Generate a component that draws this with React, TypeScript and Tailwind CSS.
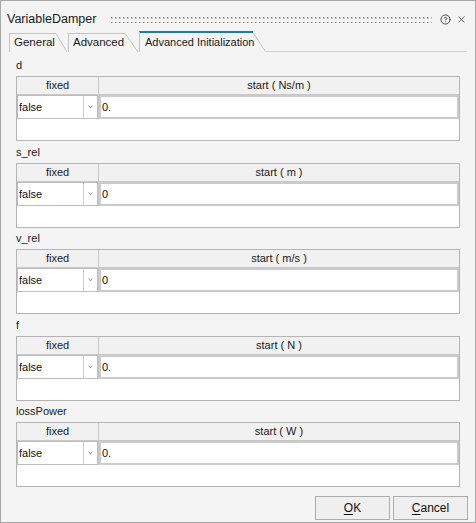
import { CircleHelp, X } from "lucide-react";

type Param = {
  name: string;
  unit: string;
  start: string;
};

const params: Param[] = [
  { name: "d", unit: "Ns/m", start: "0." },
  { name: "s_rel", unit: "m", start: "0" },
  { name: "v_rel", unit: "m/s", start: "0" },
  { name: "f", unit: "N", start: "0." },
  { name: "lossPower", unit: "W", start: "0." },
];

function Gripper() {
  return (
    <svg className="h-[7px] flex-1" preserveAspectRatio="none">
      <defs>
        <pattern id="grip" width="4" height="5" patternUnits="userSpaceOnUse">
          <rect x="1" y="1" width="1.5" height="1.5" fill="#7c7c7c" />
        </pattern>
      </defs>
      <rect width="100%" height="100%" fill="url(#grip)" />
    </svg>
  );
}

function Slant({ w, h, top = 0 }: { w: number; h: number; top?: number }) {
  return (
    <svg width={w} height={h} className="block shrink-0">
      <line x1="0" y1={top + 0.5} x2={w} y2={h} stroke="#c4c4c4" strokeWidth="1" />
    </svg>
  );
}

function Tab({ label, width, slant }: { label: string; width: number; slant: number }) {
  return (
    <div className="flex h-[19px] items-stretch">
      <div
        className="flex items-center whitespace-nowrap border-l border-t border-[#c4c4c4] pl-[4px] text-[11.5px] text-[#1a1a1a]"
        style={{ width }}
      >
        {label}
      </div>
      <Slant w={slant} h={19} />
    </div>
  );
}

function ParamTable({ p }: { p: Param }) {
  return (
    <div className="flex h-[65px] flex-col border border-[#b4b4b4] bg-white">
      {/* header */}
      <div className="flex h-[18px] shrink-0 border-b border-[#c8c8c8] bg-[#f1f1f1] text-[11px] text-[#1a1a1a]">
        <div className="flex w-[82px] items-center justify-center border-r border-[#c8c8c8]">fixed</div>
        <div className="flex flex-1 items-center justify-center">start ( {p.unit} )</div>
      </div>

      {/* value row */}
      <div className="flex h-[24px] shrink-0 text-[11px] text-[#111]">
        <div className="flex w-[82px] border-r border-[#c8c8c8]">
          <div className="flex w-[81px] border border-[#bdbdbd] bg-white">
            <div className="flex flex-1 items-center border-r border-[#cfcfcf] pl-[1px]">false</div>
            <div className="flex w-[13px] items-center justify-center">
              <svg width="5" height="4" viewBox="0 0 5 4">
                <path d="M0 0.5 L2.5 3.5 L5 0.5 L4 0.5 L2.5 2 L1 0.5 Z" fill="#a0a0a0" />
              </svg>
            </div>
          </div>
        </div>
        <div className="flex flex-1 items-center border-2 border-[#cbcbcb] bg-white pl-[1px]">{p.start}</div>
      </div>

      <div className="flex-1" />
    </div>
  );
}

export default function App() {
  return (
    <div
      className="flex h-[523px] w-[476px] flex-col border border-[#a8a8a8] bg-[#f4f4f4] text-[#1a1a1a]"
      style={{ fontFamily: '"Liberation Sans", Arial, sans-serif' }}
    >
      {/* title bar */}
      <div className="flex h-[30px] shrink-0 items-center pl-[6px] pr-[8px] pt-[6px]">
        <span className="text-[12.5px]">VariableDamper</span>
        <div className="ml-[14px] flex flex-1 items-center">
          <Gripper />
        </div>
        <div className="ml-[7px] flex h-[12px] w-[12px] items-center justify-center">
          <CircleHelp size={11} strokeWidth={2} color="#3a3a3a" />
        </div>
        <div className="ml-[4px] flex h-[12px] w-[12px] items-center justify-center">
          <X size={11} strokeWidth={1.6} color="#3a3a3a" />
        </div>
      </div>

      {/* tabs */}
      <div className="flex h-[21px] shrink-0 items-start pl-[8px] pr-[8px]">
        <div className="mt-[2px] flex">
          <Tab label="General" width={47} slant={11} />
        </div>
        <div className="ml-[1px] mt-[2px] flex">
          <Tab label="Advanced" width={57} slant={13} />
        </div>
        <div className="ml-[1px] flex h-[21px] items-stretch">
          <div className="flex w-[114px] items-center whitespace-nowrap border-l border-t-2 border-l-[#c4c4c4] border-t-[#1a7ab3] pb-[1px] pl-[5px] text-[11px] text-[#1a1a1a]">
            Advanced Initialization
          </div>
          <Slant w={12} h={20} top={1} />
        </div>
        <div className="h-[21px] flex-1 border-b border-[#d0d0d0]" />
      </div>

      {/* parameters */}
      <div className="flex flex-col px-[15px] pt-[6px]">
        {params.map((p, i) => (
          <div key={p.name} className={i === 0 ? "" : i % 2 === 1 ? "mt-[4px]" : "mt-[3px]"}>
            <div className="flex h-[14px] items-center text-[11px] text-[#1a1a1a]">{p.name}</div>
            <div className="mt-[4px]">
              <ParamTable p={p} />
            </div>
          </div>
        ))}
      </div>

      {/* buttons */}
      <div className="mt-auto flex justify-end gap-[3px] pb-[2px] pr-[7px]">
        <button className="flex h-[24px] w-[75px] items-center justify-center border border-[#adadad] bg-[#efefef] text-[12px] text-[#111]">
          <span className="underline underline-offset-2">O</span>K
        </button>
        <button className="flex h-[24px] w-[75px] items-center justify-center border border-[#adadad] bg-[#efefef] text-[12px] text-[#111]">
          <span className="underline underline-offset-2">C</span>ancel
        </button>
      </div>
    </div>
  );
}
